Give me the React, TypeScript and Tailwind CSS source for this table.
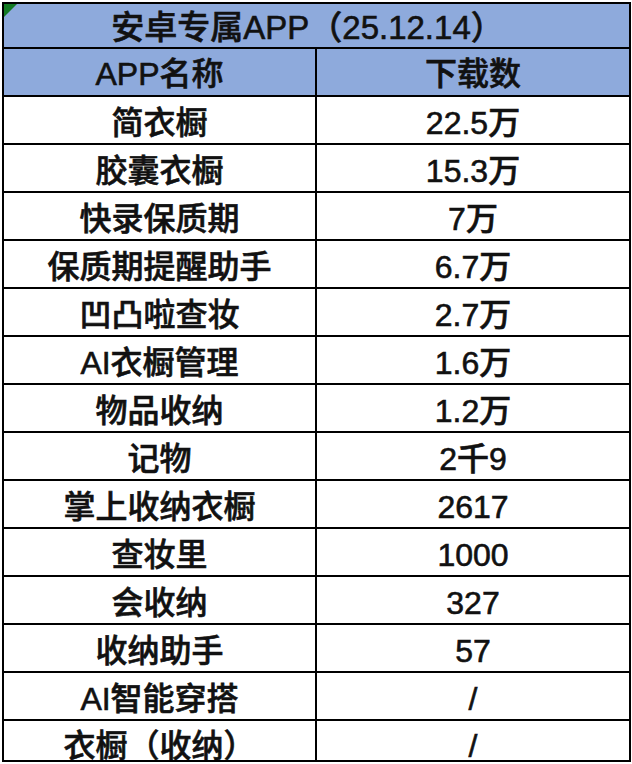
import React from "react";

type Row = { name: string; count: string };

const rows: Row[] = [
  { name: "简衣橱", count: "22.5万" },
  { name: "胶囊衣橱", count: "15.3万" },
  { name: "快录保质期", count: "7万" },
  { name: "保质期提醒助手", count: "6.7万" },
  { name: "凹凸啦查妆", count: "2.7万" },
  { name: "AI衣橱管理", count: "1.6万" },
  { name: "物品收纳", count: "1.2万" },
  { name: "记物", count: "2千9" },
  { name: "掌上收纳衣橱", count: "2617" },
  { name: "查妆里", count: "1000" },
  { name: "会收纳", count: "327" },
  { name: "收纳助手", count: "57" },
  { name: "AI智能穿搭", count: "/" },
  { name: "衣橱（收纳）", count: "/" },
];

const font = {
  fontFamily: '"Liberation Sans", "Noto Sans CJK SC", sans-serif',
};

export default function App() {
  return (
    <div className="w-[632px] h-[764px] bg-white overflow-hidden pt-[2px] pl-[2px]" style={font}>
      <div className="relative w-[629px] border-l-2 border-t-2 border-r-2 border-black text-[#111] font-medium [-webkit-text-stroke:0.6px_#111]">
        <svg className="absolute left-0 top-0" width="14" height="14" viewBox="0 0 14 14">
          <polygon points="0,0 13,0 0,13" fill="#137a23" />
        </svg>
        {/* Title */}
        <div className="h-[45px] border-b-2 border-black bg-[#8eaadc] flex items-center justify-center pr-[18px] pt-[3px] text-[33px] leading-none whitespace-nowrap">
          安卓专属APP（25.12.14）
        </div>
        {/* Header */}
        <div className="h-[48px] border-b-2 border-black bg-[#8eaadc] flex text-[32px] leading-none">
          <div className="w-[313px] border-r-2 border-black flex items-center justify-center pt-[4px]">
            APP名称
          </div>
          <div className="flex-1 flex items-center justify-center pt-[4px]">下载数</div>
        </div>
        {rows.map((r, i) => {
          const last = i === rows.length - 1;
          return (
            <div
              key={r.name}
              className={
                last
                  ? "h-[41px] border-b-2 border-black flex text-[32px] leading-none overflow-hidden items-start"
                  : "h-[48px] border-b-2 border-black flex text-[32px] leading-none"
              }
            >
              <div
                className={
                  last
                    ? "w-[313px] h-[46px] shrink-0 border-r-2 border-black flex items-center justify-center pt-[4px]"
                    : "w-[313px] border-r-2 border-black flex items-center justify-center pt-[5px]"
                }
              >
                {r.name}
              </div>
              <div
                className={
                  last
                    ? "flex-1 h-[46px] flex items-center justify-center pt-[4px]"
                    : "flex-1 flex items-center justify-center pt-[5px]"
                }
              >
                {r.count}
              </div>
            </div>
          );
        })}
      </div>
    </div>
  );
}
